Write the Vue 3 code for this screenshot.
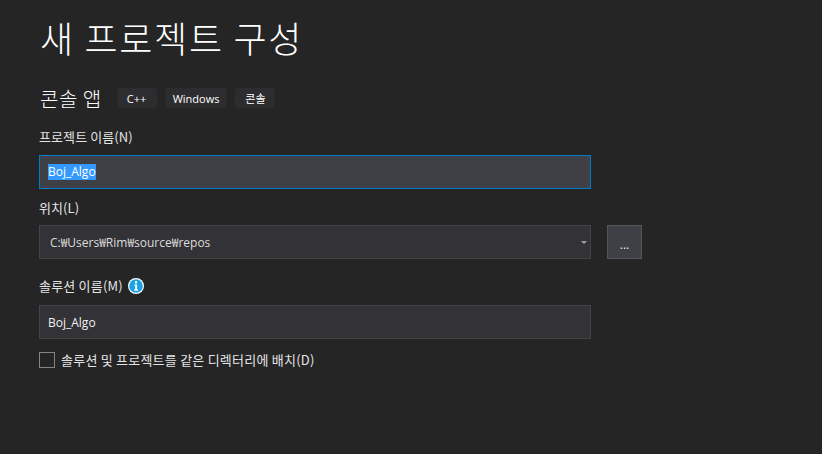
<script setup>
const tags = ['C++', 'Windows', '콘솔']
</script>

<template>
  <main class="page">
    <h1 class="title">새 프로젝트 구성</h1>
    <div class="sub">
      <h2 class="subtitle">콘솔 앱</h2>
      <span v-for="t in tags" :key="t" class="tag">{{ t }}</span>
    </div>

    <label class="label first">프로젝트 이름(N)</label>
    <div class="input focused"><span class="sel">Boj_Algo</span></div>

    <label class="label loc">위치(L)</label>
    <div class="row">
      <div class="input combo">
        <span class="path">C:₩Users₩Rim₩source₩repos</span>
        <svg class="caret" width="6" height="3" viewBox="0 0 6 3"><path d="M0 0h6L3 3z" fill="#a0a0a0" /></svg>
      </div>
      <button class="browse">...</button>
    </div>

    <div class="label-row">
      <label class="label sol">솔루션 이름(M)</label>
      <svg class="info" width="16" height="16" viewBox="0 0 16 16">
        <circle cx="8" cy="8" r="8" fill="#fff" />
        <circle cx="8" cy="8" r="6.8" fill="#1ba1e2" />
        <rect x="6.9" y="3.2" width="2.2" height="2.2" fill="#fff" />
        <path d="M6.2 6.4h2.9v5.2h1v1.2H6.2v-1.2h1v-4h-1z" fill="#fff" />
      </svg>
    </div>
    <div class="input"><span>Boj_Algo</span></div>

    <div class="check">
      <span class="box"></span>
      <span class="check-text">솔루션 및 프로젝트를 같은 디렉터리에 배치(D)</span>
    </div>
  </main>
</template>

<style scoped>
.page {
  box-sizing: border-box;
  width: 822px;
  height: 454px;
  padding: 0 0 0 39px;
  background: #252526;
  color: #f1f1f1;
  font-family: "Open Sans", "Noto Sans CJK KR", sans-serif;
  overflow: hidden;
}
.title {
  margin: 0 0 0 1px;
  height: 76px;
  font-family: "Noto Sans CJK KR", sans-serif;
  font-size: 36px;
  font-weight: 300;
  line-height: 75px;
  letter-spacing: 1.7px;
  color: #fff;
}
.sub {
  display: flex;
  align-items: center;
  height: 44px;
}
.subtitle {
  margin: 0 15px 0 1px;
  font-family: "Noto Sans CJK KR", sans-serif;
  font-size: 20px;
  font-weight: 300;
  line-height: 41px;
  letter-spacing: 0.5px;
  color: #fff;
}
.tag {
  box-sizing: border-box;
  min-width: 40px;
  height: 20px;
  margin-right: 8px;
  padding: 0 8px;
  border-radius: 4px;
  background: #2d2d30;
  font-size: 11px;
  font-weight: 400;
  line-height: 21px;
  text-align: center;
  color: #ffffff;
}
.label {
  display: block;
  font-family: "Noto Sans CJK KR", sans-serif;
  font-size: 13px;
  font-weight: 400;
  line-height: 18px;
  letter-spacing: 0.1px;
  color: #e4e4e4;
}
.sol { letter-spacing: 0.2px; }
.first { margin-top: 8px; }
.loc { margin-top: 10px; }
.input {
  box-sizing: border-box;
  display: flex;
  align-items: center;
  width: 552px;
  height: 34px;
  padding: 0 8px;
  border: 1px solid #434346;
  background: #333337;
  font-size: 12px;
  color: #f1f1f1;
}
.first + .input { margin-top: 9px; }
.focused {
  background: #3f3f46;
  border-color: #007acc;
}
.sel {
  background: #3399ff;
  color: #fff;
  line-height: 16px;
}
.row {
  display: flex;
  gap: 16px;
  margin-top: 8px;
}
.combo {
  justify-content: space-between;
  padding: 0 3px 0 10px;
}
.path { color: #dcdcdc; }
.caret { flex: none; }
.browse {
  box-sizing: border-box;
  width: 35px;
  height: 34px;
  padding: 4px 0 0;
  border: 1px solid #555558;
  background: #3f3f46;
  color: #f1f1f1;
  font: 12px "Open Sans", sans-serif;
}
.label-row {
  display: flex;
  align-items: center;
  gap: 5px;
  height: 20px;
  margin-top: 17px;
  margin-bottom: 9px;
}
.info { flex: none; }
.check {
  display: flex;
  align-items: center;
  gap: 6px;
  margin-top: 12px;
}
.box {
  box-sizing: border-box;
  width: 16px;
  height: 16px;
  border: 1px solid #858585;
  background: #252526;
}
.check-text {
  font-family: "Noto Sans CJK KR", sans-serif;
  font-size: 13px;
  font-weight: 400;
  line-height: 18px;
  letter-spacing: 0.23px;
  color: #e4e4e4;
}
</style>

<style>
html, body { margin: 0; background: #252526; }
</style>
